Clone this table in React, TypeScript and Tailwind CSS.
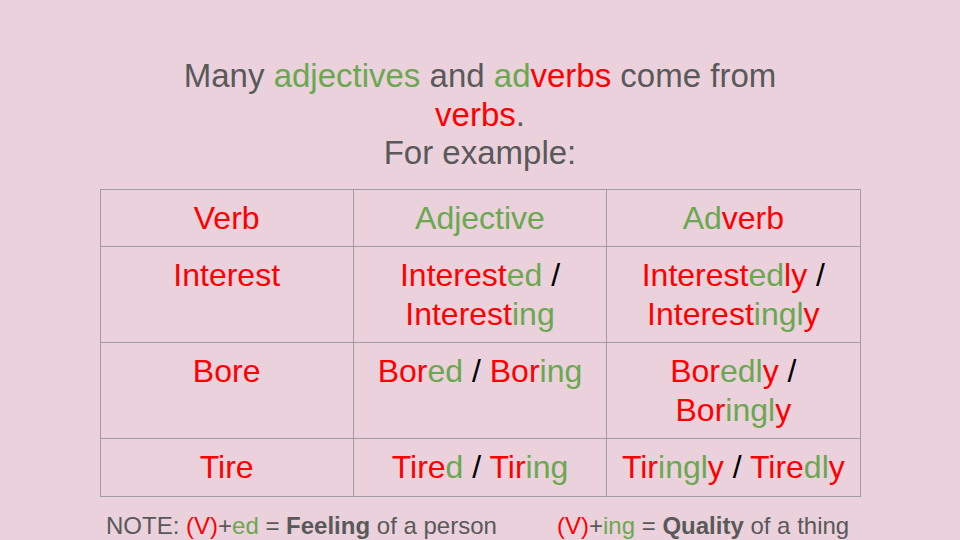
const R = ({ children }: { children: React.ReactNode }) => (
  <span className="text-[#ff0000]">{children}</span>
);
const G = ({ children }: { children: React.ReactNode }) => (
  <span className="text-[#6aa84f]">{children}</span>
);
const S = () => <span className="text-black"> / </span>;

const rows: React.ReactNode[][] = [
  [
    <R>Verb</R>,
    <G>Adjective</G>,
    <>
      <G>Ad</G>
      <R>verb</R>
    </>,
  ],
  [
    <R>Interest</R>,
    <>
      <R>Interest</R>
      <G>ed</G>
      <S />
      <br />
      <R>Interest</R>
      <G>ing</G>
    </>,
    <>
      <R>Interest</R>
      <G>ed</G>
      <R>ly</R>
      <S />
      <br />
      <R>Interest</R>
      <G>ingl</G>
      <R>y</R>
    </>,
  ],
  [
    <R>Bore</R>,
    <>
      <R>Bor</R>
      <G>ed</G>
      <S />
      <R>Bor</R>
      <G>ing</G>
    </>,
    <>
      <R>Bor</R>
      <G>edl</G>
      <R>y</R>
      <S />
      <br />
      <R>Bor</R>
      <G>ingl</G>
      <R>y</R>
    </>,
  ],
  [
    <R>Tire</R>,
    <>
      <R>Tire</R>
      <G>d</G>
      <S />
      <R>Tir</R>
      <G>ing</G>
    </>,
    <>
      <R>Tir</R>
      <G>ingl</G>
      <R>y</R>
      <S />
      <R>Tire</R>
      <G>dl</G>
      <R>y</R>
    </>,
  ],
];

export default function App() {
  return (
    <div
      className="w-[960px] h-[540px] overflow-hidden bg-[#ead1dc] flex flex-col items-center"
      style={{ fontFamily: '"Liberation Sans", Arial, sans-serif' }}
    >
      <div className="mt-[57px] text-center text-[33px] leading-[38.5px] text-[#595959]">
        <p>
          Many <G>adjectives</G> and <G>ad</G>
          <R>verbs</R> come from
        </p>
        <p>
          <R>verbs</R>.
        </p>
        <p>For example:</p>
      </div>
      <table className="mt-[16px] w-[761px] table-fixed border-collapse text-[32px] leading-[38.5px]">
        <tbody>
          {rows.map((row, i) => (
            <tr key={i} className={i === 0 ? "h-[57px]" : i === 3 ? "h-[58px]" : ""}>
              {row.map((cell, j) => (
                <td
                  key={j}
                  className="border border-[#9e9e9e] px-2 py-[9px] text-center align-top"
                >
                  {cell}
                </td>
              ))}
            </tr>
          ))}
        </tbody>
      </table>
      <div className="mt-[14px] w-[760px] pl-[6px] flex text-[24px] leading-[29px] text-[#595959]">
        <p className="w-[451px]">
          NOTE: <R>(V)</R>+<G>ed</G> = <b>Feeling</b> of a person
        </p>
        <p>
          <R>(V)</R>+<G>ing</G> = <b>Quality</b> of a thing
        </p>
      </div>
    </div>
  );
}
